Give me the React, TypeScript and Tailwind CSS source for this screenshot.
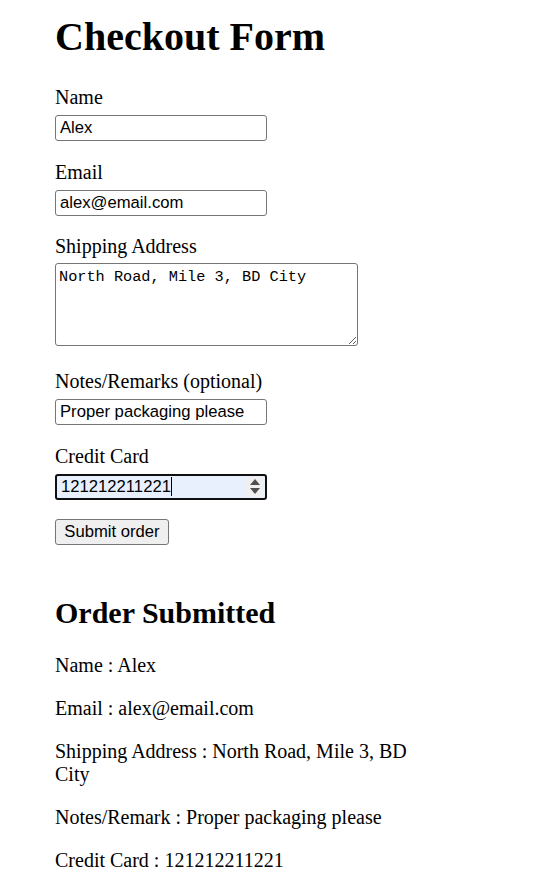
import React from "react";

const inputCls =
  "block w-[212px] h-[26px] mt-[6px] px-[4px] border border-[#767676] rounded-[3px] bg-white text-black font-['Liberation_Sans',Arial,sans-serif] text-[16.67px] leading-[20px] outline-none";

function Field({ label, value }: { label: string; value: string }) {
  return (
    <div className="mb-[19.5px]">
      <label className="block leading-[23px]">{label}</label>
      <input type="text" defaultValue={value} readOnly className={inputCls} />
    </div>
  );
}

export default function App() {
  const order = [
    ["Name", "Alex"],
    ["Email", "alex@email.com"],
    ["Shipping Address", "North Road, Mile 3, BD City"],
    ["Notes/Remark", "Proper packaging please"],
    ["Credit Card", "121212211221"],
  ];

  return (
    <div className="min-h-[883px] bg-white text-black font-['Liberation_Serif','Times_New_Roman',serif] text-[20px] leading-[23px]">
      <div className="w-[430px] pl-[55px] pt-[14px]">
        <h1 className="text-[40px] font-bold leading-[46px]">Checkout Form</h1>

        <form className="mt-[26px]" onSubmit={(e) => e.preventDefault()}>
          <Field label="Name" value="Alex" />
          <Field label="Email" value="alex@email.com" />

          <div className="mb-[24px]">
            <label className="block leading-[23px]">Shipping Address</label>
            <textarea
              readOnly
              defaultValue="North Road, Mile 3, BD City"
              className="block w-[303px] h-[83px] mt-[5px] px-[3px] pt-[4px] border border-[#767676] rounded-[3px] bg-white text-black font-['Liberation_Mono','Courier_New',monospace] text-[15.25px] leading-[19px] outline-none resize"
            />
          </div>

          <Field label="Notes/Remarks (optional)" value="Proper packaging please" />

          <div>
            <label className="block leading-[23px]">Credit Card</label>
            <div className="relative flex items-center w-[212px] h-[26px] mt-[6px] pl-[4px] border-2 border-[#101010] rounded-[3px] bg-[#e8f0fe] font-['Liberation_Sans',Arial,sans-serif] text-[16.67px] leading-[20px]">
              <span>121212211221</span>
              <span className="w-px h-[19px] bg-black" />
              <div className="absolute right-[1px] top-[1px] bottom-[1px] w-[18px] bg-[#efefef] flex flex-col items-center justify-center gap-[3px]">
                <svg width="10" height="6" viewBox="0 0 10 6">
                  <path d="M5 0 L10 6 L0 6 Z" fill="#505050" />
                </svg>
                <svg width="10" height="6" viewBox="0 0 10 6">
                  <path d="M0 0 L10 0 L5 6 Z" fill="#505050" />
                </svg>
              </div>
            </div>
          </div>

          <button
            type="submit"
            className="block mt-[19.5px] w-[114px] h-[26px] border border-[#767676] rounded-[3px] bg-[#efefef] text-black font-['Liberation_Sans',Arial,sans-serif] text-[16.67px] leading-[20px]"
          >
            Submit order
          </button>
        </form>

        <h2 className="mt-[50px] text-[30px] font-bold leading-[35px]">Order Submitted</h2>
        <div className="mt-[24px]">
          {order.map(([k, v]) => (
            <p key={k} className="mb-[20px] leading-[23px]">
              {`${k} : ${v}`}
            </p>
          ))}
        </div>
      </div>
    </div>
  );
}
